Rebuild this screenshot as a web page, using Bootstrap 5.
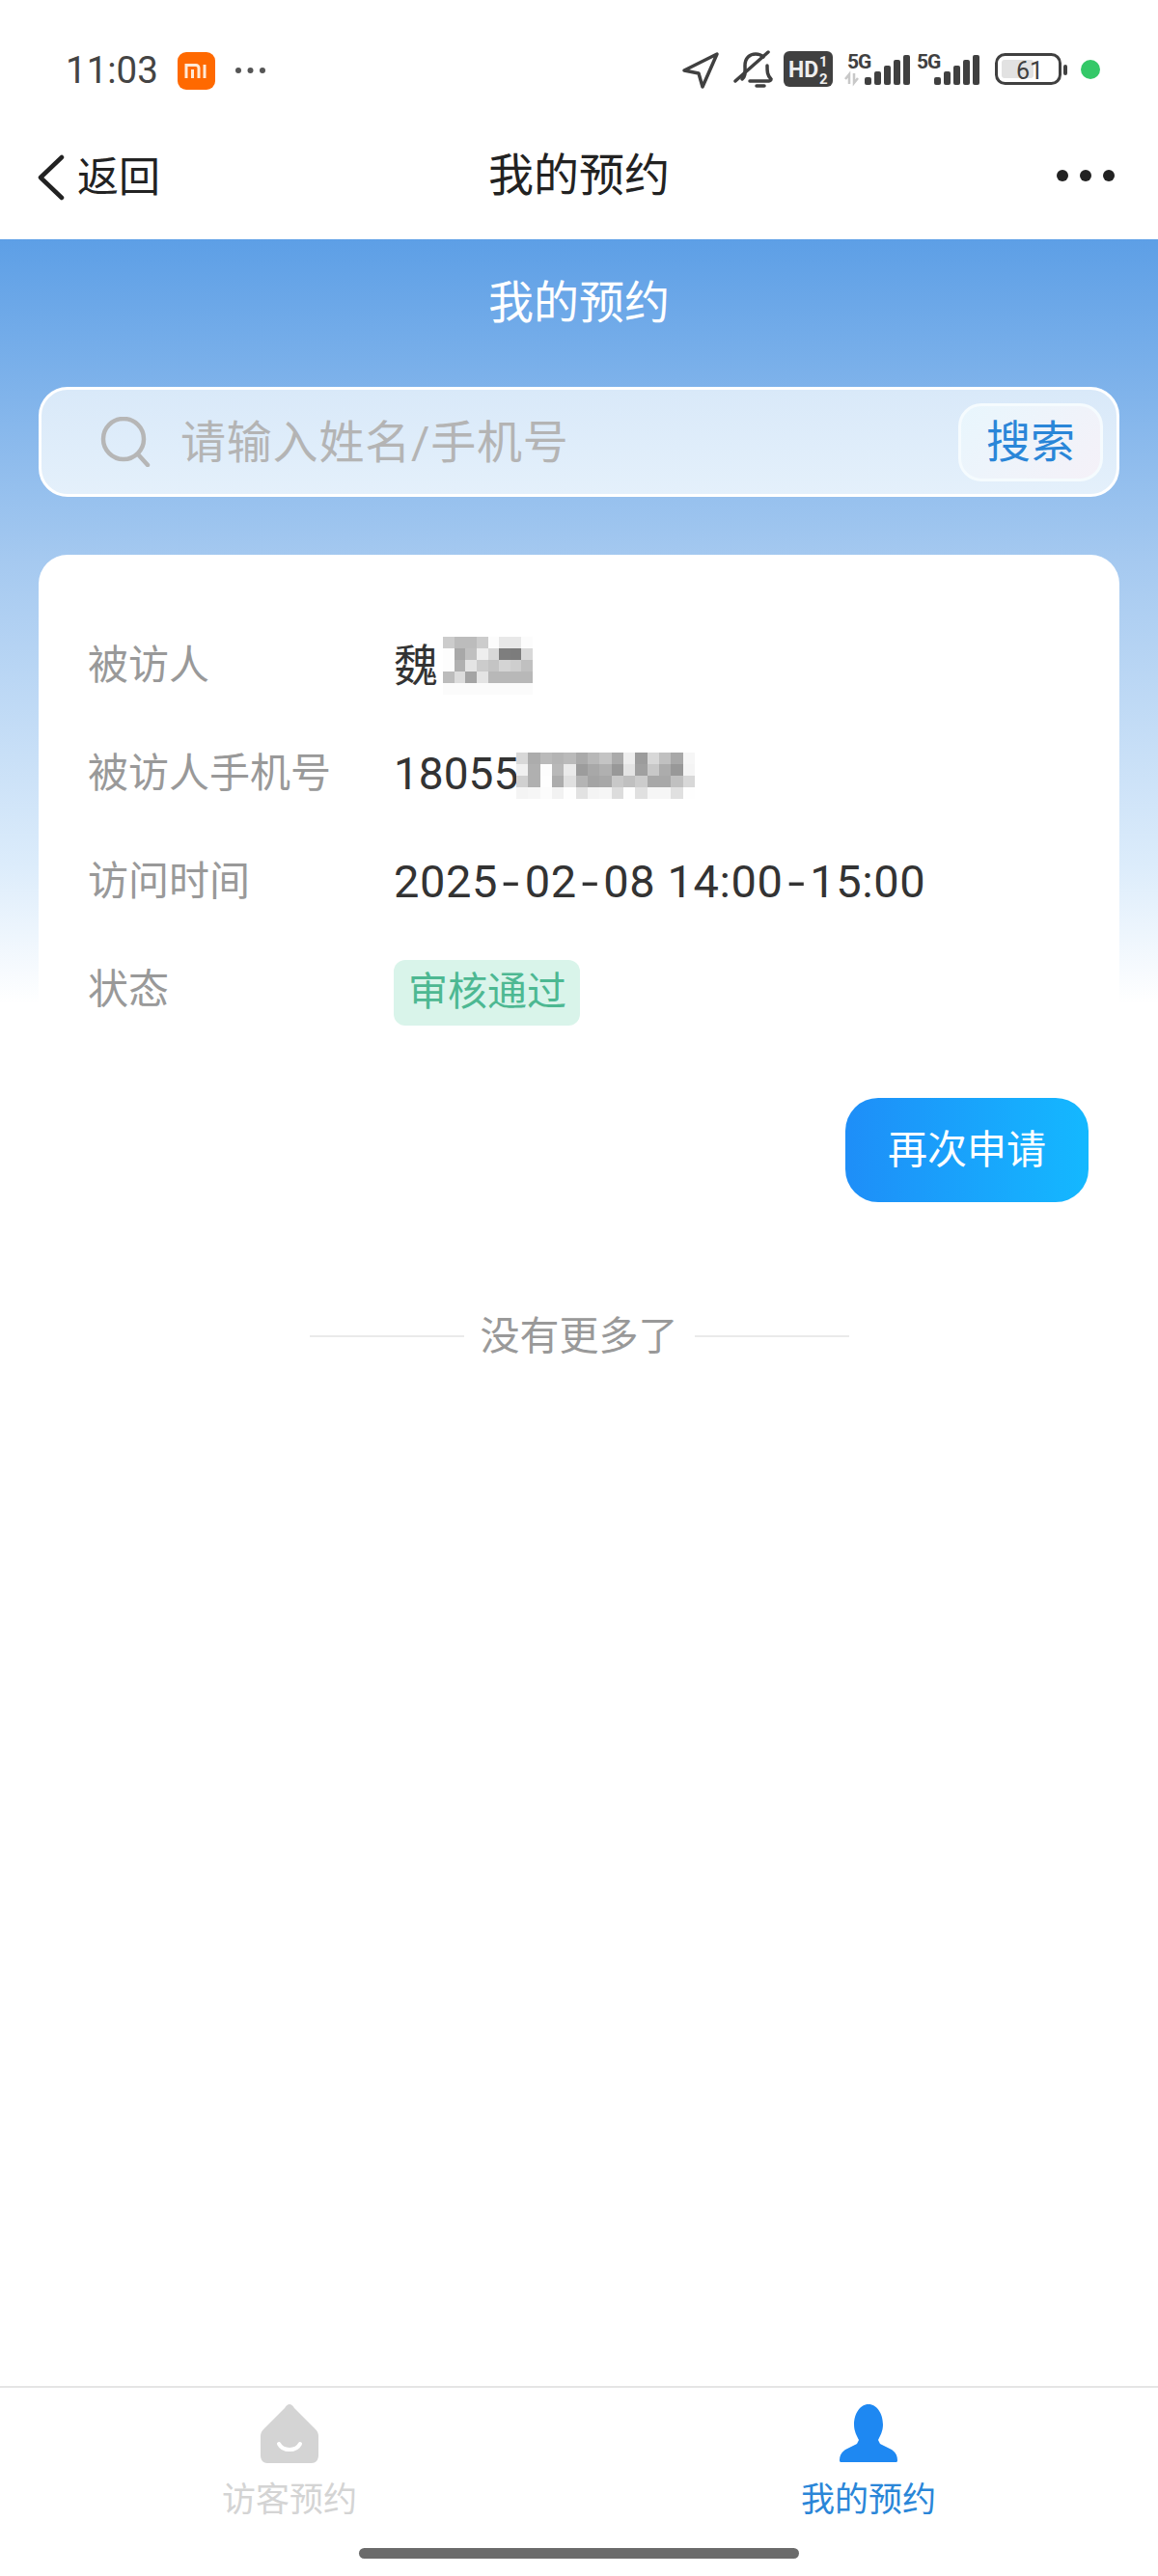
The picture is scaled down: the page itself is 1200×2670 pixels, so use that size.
<!DOCTYPE html>
<html lang="zh">
<head>
<meta charset="utf-8">
<title>我的预约</title>
<link rel="stylesheet" href="https://cdn.jsdelivr.net/npm/bootstrap@5.3.0/dist/css/bootstrap.min.css">
<style>
html,body{height:2670px}
body{font-family:Roboto,"Noto Sans CJK SC",sans-serif;color:#333;background:#fff;width:1200px;overflow:hidden}
.statusbar{height:120px;padding:45px 60px 0 68px;color:#404040}
.status-left{margin-top:8px}
.stime{font-size:38.500px;line-height:40px;font-weight:400;color:#444}
.mi-logo{width:39px;height:39px;border-radius:9px;background:#ff6900;margin-left:20px}
.sdots{margin-left:20px;width:33px}
.topnav{height:128px;padding:0 45px 0 38px;background:#fff;position:relative}
.back-txt{font-size:43px;color:#222;line-height:1;margin-left:12px}
.top-title{font-size:47px;color:#222;line-height:1;position:absolute;left:0;right:0;text-align:center;top:38px;margin:0;font-weight:400}
.more-dots{margin-bottom:4px}
.page-main{flex:1 1 auto;background:linear-gradient(180deg,#5d9fe6 0,#a5c9f0 42%,#dcecfb 82%,#fff 100%) top/100% 792px no-repeat,#fff;padding:0 40px}
.hero-title{font-size:47px;color:#fff;line-height:1;font-weight:400;text-align:center;margin:42px 0 64px}
.search-box{height:114px;border:3px solid #fff;border-radius:30px;background:linear-gradient(180deg,#d9e9f9,#e4f0fb);padding:0 14px 0 60px}
.search-hold{font-size:47px;line-height:1;color:#b4b4b4;margin-left:30px;letter-spacing:.8px}
.search-go{width:150px;height:81px;border:3px solid #f5fbfe;border-radius:24px;background:linear-gradient(135deg,#e8f6fd,#f5f1f8);color:#2a86d8;font-size:46px;line-height:1;padding:0}
.info-panel{margin-top:60px;background:#fff;border-radius:30px 30px 0 0;padding:87px 51px 0}
.info-line{height:112px;margin:0}
.info-line>div{padding:0}
.info-key{width:317px;flex:none;font-size:42px;color:#999;line-height:56px}
.info-val{font-size:46px;color:#333;line-height:56px;position:relative}
.date-val{font-size:47px;letter-spacing:.6px}
.dash{display:inline-block;margin:0 7px;transform:scaleX(1.35)}
.pix{position:absolute;display:block}
.status-tag{font-size:41px;line-height:1;color:#4db892;background:#d9f4ea;border-radius:12px;padding:13px 14px 14px 15px;display:inline-block;font-weight:400;margin-top:-10px}
.again-wrap{margin:28px -8px 0 0;padding-right:40px}
.again-btn{width:252px;height:108px;border:0;border-radius:34px;background:linear-gradient(90deg,#1e8ef8,#14b8ff);color:#fff;font-size:41px;line-height:1;padding:0}
.no-more{margin-top:111px;font-size:41px;line-height:56px;color:#999;gap:17px}
.no-more i{display:block;width:160px;height:2px;background:#eaeaea}
.tabbar{height:197px;border-top:2px solid #e5e5e5;background:#fff;position:relative;padding-top:16px}
.tab-item{width:600px;font-size:35px;line-height:1;color:#d4d4d4}
.tab-item.on{color:#2a86d8}
.tab-item svg{display:block;margin-bottom:21px}
.home-bar{position:absolute;left:372px;width:456px;height:11px;bottom:18px;background:#6b6b6b;border-radius:6px}
</style>
</head>
<body class="d-flex flex-column">

<div class="statusbar d-flex justify-content-between align-items-start">
  <div class="status-left d-flex align-items-center">
    <span class="stime">11:03</span>
    <span class="mi-logo d-flex align-items-center justify-content-center">
      <svg width="24" height="16" viewBox="0 0 24 16"><path d="M2 16V2.500h10a3 3 0 0 1 3 3V16M8.500 7v9M21 2v14" fill="none" stroke="#ffe9d6" stroke-width="3"/></svg>
    </span>
    <svg class="sdots" height="8" viewBox="0 0 33 8"><circle cx="4" cy="4" r="3" fill="#555"/><circle cx="16.500" cy="4" r="3" fill="#555"/><circle cx="29" cy="4" r="3" fill="#555"/></svg>
  </div>
  <svg width="434" height="50" viewBox="706 45 434 50">
    <path d="M709 73 743 56 728 90 724 76Z" fill="none" stroke="#404040" stroke-width="3.500" stroke-linejoin="round"/>
    <path d="M769 82c4-3 3-8 3-14 0-8 5-12 11-12 3 0 6 1 8 3M795 68c0 6 0 10 4 14 0 1-1 2-2 2h-20M784 89h8" fill="none" stroke="#404040" stroke-width="3.500" stroke-linecap="round"/>
    <path d="M762 84 796 54" stroke="#404040" stroke-width="3.500" stroke-linecap="round"/>
    <rect x="812" y="53" width="51" height="37" rx="6" fill="#404040"/>
    <text x="817" y="80" font-family="Roboto,sans-serif" font-weight="700" font-size="23" fill="#eee">HD</text>
    <text x="849" y="69" font-family="Roboto,sans-serif" font-weight="700" font-size="15" fill="#eee">1</text>
    <text x="849" y="87" font-family="Roboto,sans-serif" font-weight="700" font-size="15" fill="#eee">2</text>
    <text x="878" y="71" font-family="Roboto,sans-serif" font-weight="700" font-size="21" letter-spacing="-1" fill="#404040">5G</text>
    <path d="M880 87V77l-4 5M885 76v10l4-5" fill="none" stroke="#c8c8c8" stroke-width="2.500"/>
    <g fill="#404040"><rect x="896" y="80" width="7" height="8" rx="2"/><rect x="906" y="74" width="7" height="14" rx="2"/><rect x="916" y="68" width="7" height="20" rx="2"/><rect x="926" y="62" width="7" height="26" rx="2"/><rect x="936" y="57" width="7" height="31" rx="2"/></g>
    <text x="950" y="71" font-family="Roboto,sans-serif" font-weight="700" font-size="21" letter-spacing="-1" fill="#404040">5G</text>
    <g fill="#404040"><rect x="968" y="80" width="7" height="8" rx="2"/><rect x="978" y="74" width="7" height="14" rx="2"/><rect x="988" y="68" width="7" height="20" rx="2"/><rect x="998" y="62" width="7" height="26" rx="2"/><rect x="1008" y="57" width="7" height="31" rx="2"/></g>
    <rect x="1032.500" y="56.500" width="66" height="30" rx="9" fill="none" stroke="#404040" stroke-width="3"/>
    <rect x="1038" y="62" width="33" height="19" rx="3" fill="#e2e2e2"/>
    <text x="1053" y="81.500" font-family="Roboto,sans-serif" font-size="25" fill="#404040">61</text>
    <rect x="1102" y="67" width="4" height="11" rx="2" fill="#404040"/>
    <circle cx="1130" cy="72" r="10" fill="#34c868"/>
  </svg>
</div>

<nav class="topnav d-flex align-items-center justify-content-between">
  <div class="d-flex align-items-center">
    <svg width="30" height="48" viewBox="0 0 30 48"><path d="M26 3 4 24l22 21" fill="none" stroke="#222" stroke-width="4.500" stroke-linecap="round" stroke-linejoin="round"/></svg>
    <span class="back-txt">返回</span>
  </div>
  <h1 class="top-title">我的预约</h1>
  <svg class="more-dots" width="60" height="12" viewBox="0 0 60 12"><circle cx="6" cy="6" r="6" fill="#222"/><circle cx="30" cy="6" r="6" fill="#222"/><circle cx="54" cy="6" r="6" fill="#222"/></svg>
</nav>

<main class="page-main">
  <h2 class="hero-title">我的预约</h2>

  <div class="search-box d-flex align-items-center">
    <svg width="54" height="52" viewBox="0 0 54 52"><circle cx="25" cy="23" r="21" fill="none" stroke="#b6b6b6" stroke-width="4.500"/><path d="M41 40l9 10" stroke="#b6b6b6" stroke-width="4.500" stroke-linecap="round"/></svg>
    <span class="search-hold flex-grow-1">请输入姓名/手机号</span>
    <button class="search-go btn" type="button">搜索</button>
  </div>

  <section class="info-panel">
    <div class="row info-line align-items-start">
      <div class="info-key">被访人</div>
      <div class="col info-val">魏
        <svg class="pix" style="left:51px;top:-2px" width="93" height="60" viewBox="0 0 8 5" preserveAspectRatio="none" shape-rendering="crispEdges">
          <g>
            <rect x="0" y="0" width="1" height="1" fill="#ccc"/><rect x="1" y="0" width="1" height="1" fill="#bcbcbc"/><rect x="2" y="0" width="1" height="1" fill="#bcbcbc"/><rect x="3" y="0" width="1" height="1" fill="#ccc"/><rect x="4" y="0" width="1" height="1" fill="#fcfcfc"/><rect x="5" y="0" width="1" height="1" fill="#e8e8e8"/><rect x="6" y="0" width="1" height="1" fill="#e8e8e8"/><rect x="7" y="0" width="1" height="1" fill="#fcfcfc"/>
            <rect x="0" y="1" width="1" height="1" fill="#fdfdfd"/><rect x="1" y="1" width="1" height="1" fill="#a8a8a8"/><rect x="2" y="1" width="1" height="1" fill="#c0c0c0"/><rect x="3" y="1" width="1" height="1" fill="#eee"/><rect x="4" y="1" width="1" height="1" fill="#d8d8d8"/><rect x="5" y="1" width="1" height="1" fill="#7e7e7e"/><rect x="6" y="1" width="1" height="1" fill="#7c7c7c"/><rect x="7" y="1" width="1" height="1" fill="#d8d8d8"/>
            <rect x="0" y="2" width="1" height="1" fill="#fdfdfd"/><rect x="1" y="2" width="1" height="1" fill="#b0b0b0"/><rect x="2" y="2" width="1" height="1" fill="#e4e4e4"/><rect x="3" y="2" width="1" height="1" fill="#ccc"/><rect x="4" y="2" width="1" height="1" fill="#c4c4c4"/><rect x="5" y="2" width="1" height="1" fill="#d4d4d4"/><rect x="6" y="2" width="1" height="1" fill="#cecece"/><rect x="7" y="2" width="1" height="1" fill="#c0c0c0"/>
            <rect x="0" y="3" width="1" height="1" fill="#bcbcbc"/><rect x="1" y="3" width="1" height="1" fill="#dcdcdc"/><rect x="2" y="3" width="1" height="1" fill="#a4a4a4"/><rect x="3" y="3" width="1" height="1" fill="#e4e4e4"/><rect x="4" y="3" width="1" height="1" fill="#b8b8b8"/><rect x="5" y="3" width="1" height="1" fill="#b8b8b8"/><rect x="6" y="3" width="1" height="1" fill="#b8b8b8"/><rect x="7" y="3" width="1" height="1" fill="#b8b8b8"/>
            <rect x="0" y="4" width="8" height="1" fill="#fbfbfb"/>
          </g>
        </svg>
      </div>
    </div>
    <div class="row info-line align-items-start">
      <div class="info-key">被访人手机号</div>
      <div class="col info-val">18055
        <svg class="pix" style="left:127px;top:6px" width="185" height="48" viewBox="0 0 15 4" preserveAspectRatio="none" shape-rendering="crispEdges">
          <rect x="0" y="0" width="1" height="1" fill="#d8d8d8"/><rect x="1" y="0" width="1" height="1" fill="#acacac"/><rect x="2" y="0" width="1" height="1" fill="#bababa"/><rect x="3" y="0" width="1" height="1" fill="#b4b4b4"/><rect x="4" y="0" width="1" height="1" fill="#bababa"/><rect x="5" y="0" width="1" height="1" fill="#aaa"/><rect x="6" y="0" width="1" height="1" fill="#b8b8b8"/><rect x="7" y="0" width="1" height="1" fill="#c4c4c4"/><rect x="8" y="0" width="1" height="1" fill="#aaa"/><rect x="9" y="0" width="1" height="1" fill="#eee"/><rect x="10" y="0" width="1" height="1" fill="#9c9c9c"/><rect x="11" y="0" width="1" height="1" fill="#d8d8d8"/><rect x="12" y="0" width="1" height="1" fill="#c0c0c0"/><rect x="13" y="0" width="1" height="1" fill="#a8a8a8"/><rect x="14" y="0" width="1" height="1" fill="#f6f6f6"/>
          <rect x="0" y="1" width="1" height="1" fill="#f0f0f0"/><rect x="1" y="1" width="1" height="1" fill="#b0b0b0"/><rect x="2" y="1" width="1" height="1" fill="#fdfdfd"/><rect x="3" y="1" width="1" height="1" fill="#b8b8b8"/><rect x="4" y="1" width="1" height="1" fill="#eaeaea"/><rect x="5" y="1" width="1" height="1" fill="#9c9c9c"/><rect x="6" y="1" width="1" height="1" fill="#a8a8a8"/><rect x="7" y="1" width="1" height="1" fill="#b0b0b0"/><rect x="8" y="1" width="1" height="1" fill="#989898"/><rect x="9" y="1" width="1" height="1" fill="#e4e4e4"/><rect x="10" y="1" width="1" height="1" fill="#a0a0a0"/><rect x="11" y="1" width="1" height="1" fill="#c8c8c8"/><rect x="12" y="1" width="1" height="1" fill="#acacac"/><rect x="13" y="1" width="1" height="1" fill="#989898"/><rect x="14" y="1" width="1" height="1" fill="#f4f4f4"/>
          <rect x="0" y="2" width="1" height="1" fill="#d0d0d0"/><rect x="1" y="2" width="1" height="1" fill="#b0b0b0"/><rect x="2" y="2" width="1" height="1" fill="#fefefe"/><rect x="3" y="2" width="1" height="1" fill="#acacac"/><rect x="4" y="2" width="1" height="1" fill="#e0e0e0"/><rect x="5" y="2" width="1" height="1" fill="#b4b4b4"/><rect x="6" y="2" width="1" height="1" fill="#a4a4a4"/><rect x="7" y="2" width="1" height="1" fill="#a8a8a8"/><rect x="8" y="2" width="1" height="1" fill="#c8c8c8"/><rect x="9" y="2" width="1" height="1" fill="#c0c0c0"/><rect x="10" y="2" width="1" height="1" fill="#ccc"/><rect x="11" y="2" width="1" height="1" fill="#a8a8a8"/><rect x="12" y="2" width="1" height="1" fill="#a8a8a8"/><rect x="13" y="2" width="1" height="1" fill="#c0c0c0"/><rect x="14" y="2" width="1" height="1" fill="#d8d8d8"/>
          <rect x="0" y="3" width="1" height="1" fill="#f4f4f4"/><rect x="1" y="3" width="1" height="1" fill="#f6f6f6"/><rect x="2" y="3" width="1" height="1" fill="#fcfcfc"/><rect x="3" y="3" width="1" height="1" fill="#f2f2f2"/><rect x="4" y="3" width="1" height="1" fill="#fefefe"/><rect x="5" y="3" width="1" height="1" fill="#e2e2e2"/><rect x="6" y="3" width="1" height="1" fill="#f4f4f4"/><rect x="7" y="3" width="1" height="1" fill="#f6f6f6"/><rect x="8" y="3" width="1" height="1" fill="#dcdcdc"/><rect x="9" y="3" width="1" height="1" fill="#fefefe"/><rect x="10" y="3" width="1" height="1" fill="#e0e0e0"/><rect x="11" y="3" width="1" height="1" fill="#f6f6f6"/><rect x="12" y="3" width="1" height="1" fill="#f6f6f6"/><rect x="13" y="3" width="1" height="1" fill="#e0e0e0"/><rect x="14" y="3" width="1" height="1" fill="#fefefe"/>
        </svg>
      </div>
    </div>
    <div class="row info-line align-items-start">
      <div class="info-key">访问时间</div>
      <div class="col info-val date-val">2025<span class="dash">-</span>02<span class="dash">-</span>08 14:00<span class="dash">-</span>15:00</div>
    </div>
    <div class="row info-line align-items-start">
      <div class="info-key">状态</div>
      <div class="col info-val"><span class="status-tag">审核通过</span></div>
    </div>
  </section>

  <div class="again-wrap d-flex justify-content-end">
    <button class="again-btn btn" type="button">再次申请</button>
  </div>

  <div class="no-more d-flex align-items-center justify-content-center">
    <i></i><span>没有更多了</span><i></i>
  </div>
</main>

<footer class="tabbar d-flex">
  <div class="tab-item d-flex flex-column align-items-center">
    <svg width="62" height="62" viewBox="0 0 62 62"><path d="M31 1c2 0 3 1 5 4l21 21c3 3 4 5 4 8v20c0 5-3 8-7 8H8c-4 0-7-3-7-8V34c0-3 1-5 4-8L26 5c2-3 3-4 5-4Z" fill="#d4d4d4"/><path d="M20 42c4 8 18 8 22 0" fill="none" stroke="#fff" stroke-width="4" stroke-linecap="round"/></svg>
    <span>访客预约</span>
  </div>
  <div class="tab-item on d-flex flex-column align-items-center">
    <svg width="62" height="62" viewBox="0 0 62 62"><path d="M31 1c9 0 15 10 15 21 0 7-3 12-5 16l2 4 12 6c4 3 6 6 6 11 0 2-1 2-2 2H3c-1 0-2 0-2-2 0-5 2-8 6-11l12-6 2-4c-2-4-5-9-5-16C16 11 22 1 31 1Z" fill="#1e88f2"/></svg>
    <span>我的预约</span>
  </div>
  <div class="home-bar"></div>
</footer>

<script src="https://cdn.jsdelivr.net/npm/bootstrap@5.3.0/dist/js/bootstrap.bundle.min.js"></script>
</body>
</html>
